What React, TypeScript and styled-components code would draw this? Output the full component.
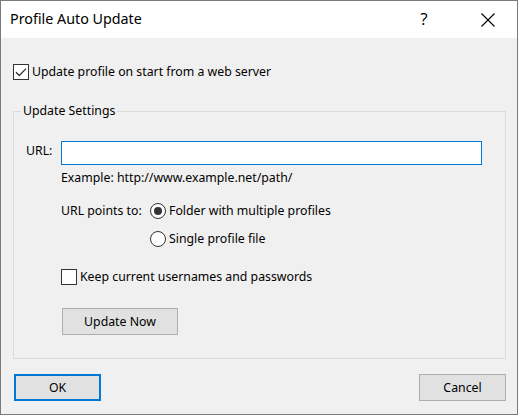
import styled, { createGlobalStyle } from 'styled-components';

const GlobalStyle = createGlobalStyle`
  html, body {
    margin: 0;
    padding: 0;
    background: #ffffff;
  }
  body {
    font-family: "Noto Sans", "Open Sans", "Liberation Sans", sans-serif;
    font-size: 12.3px;
    line-height: 16px;
    color: #000;
  }
`;

const App = () => {
  return (
    <>
      <GlobalStyle />
      <Window>
        <TitleBar>
          <Title>Profile Auto Update</Title>
          <HelpButton>?</HelpButton>
          <CloseButton>
            <svg width="14" height="14" viewBox="0 0 14 14">
              <path d="M0.5 0.5L13.5 13.5M13.5 0.5L0.5 13.5" stroke="#000" strokeWidth="1.1" fill="none" />
            </svg>
          </CloseButton>
        </TitleBar>

        <Body>
          <CheckRow>
            <CheckBox checked />
            <span>Update profile on start from a web server</span>
          </CheckRow>

          <Group>
            <Legend>Update Settings</Legend>

            <UrlRow>
              <FieldLabel>URL:</FieldLabel>
              <UrlInput type="text" />
            </UrlRow>
            <Hint>Example: http://www.example.net/path/</Hint>

            <PointsGrid>
              <span>URL points to:</span>
              <RadioRow>
                <Radio checked />
                <span>Folder with multiple profiles</span>
              </RadioRow>
              <span />
              <RadioRow>
                <Radio />
                <span>Single profile file</span>
              </RadioRow>
            </PointsGrid>

            <KeepRow>
              <CheckBox />
              <span>Keep current usernames and passwords</span>
            </KeepRow>

            <UpdateButton>Update Now</UpdateButton>
          </Group>

          <Footer>
            <DialogButton primary>OK</DialogButton>
            <DialogButton>Cancel</DialogButton>
          </Footer>
        </Body>
      </Window>
    </>
  );
};

const CheckBox = ({ checked }: { checked?: boolean }) => (
  <Box>
    {checked && (
      <svg width="12" height="12" viewBox="0 0 12 12">
        <path d="M1 6.2L4.3 9.5L11 2.6" stroke="#333" strokeWidth="1.3" fill="none" />
      </svg>
    )}
  </Box>
);

const Radio = ({ checked }: { checked?: boolean }) => (
  <RadioCircle>{checked && <Dot />}</RadioCircle>
);

export default App;

const Window = styled.div`
  box-sizing: border-box;
  width: 518px;
  height: 415px;
  border: 1px solid #7a7a7a;
  background: #f0f0f0;
  display: flex;
  flex-direction: column;
`;

const TitleBar = styled.div`
  height: 37px;
  background: #ffffff;
  display: flex;
  align-items: center;
  padding-left: 9px;
  flex-shrink: 0;
`;

const Title = styled.div`
  font-size: 14.3px;
  flex: 1;
  margin-top: -1px;
`;

const HelpButton = styled.div`
  font-size: 17px;
  font-family: "Open Sans", "Noto Sans", sans-serif;
  width: 20px;
  margin-right: 47px;
  margin-top: -2px;
  text-align: center;
`;

const CloseButton = styled.div`
  width: 14px;
  height: 14px;
  margin-right: 22px;
  display: flex;
`;

const Body = styled.div`
  flex: 1;
  display: flex;
  flex-direction: column;
  padding: 26px 11px 0 12px;
`;

const CheckRow = styled.label`
  display: flex;
  align-items: center;
  gap: 3px;
  height: 16px;
`;

const Box = styled.span`
  box-sizing: border-box;
  width: 16px;
  height: 16px;
  border: 1px solid #333;
  background: #fff;
  display: flex;
  align-items: center;
  justify-content: center;
  flex-shrink: 0;
`;

const Group = styled.fieldset`
  margin: 23px 0 0 0;
  padding: 0 12px 23px 12px;
  border: 1px solid #dcdcdc;
  display: flex;
  flex-direction: column;
  align-items: flex-start;
`;

const Legend = styled.legend`
  padding: 0 2px;
  margin-left: -5px;
  line-height: 16px;
`;

const UrlRow = styled.div`
  display: grid;
  grid-template-columns: 35px 421px;
  align-items: center;
  margin-top: 22px;
  height: 24px;
`;

const FieldLabel = styled.span`
  margin-top: 2px;
  align-self: start;
`;

const UrlInput = styled.input`
  box-sizing: border-box;
  height: 24px;
  width: 100%;
  border: 1px solid #0078d7;
  background: #fff;
  outline: none;
  margin: 0;
`;

const Hint = styled.div`
  margin: 5px 0 0 35px;
`;

const PointsGrid = styled.div`
  display: grid;
  grid-template-columns: 89px auto;
  row-gap: 12px;
  align-items: center;
  margin: 17px 0 0 35px;
`;

const RadioRow = styled.label`
  display: flex;
  align-items: center;
  gap: 3px;
  height: 16px;
`;

const RadioCircle = styled.span`
  box-sizing: border-box;
  width: 16px;
  height: 16px;
  border: 1px solid #333;
  border-radius: 50%;
  background: #fff;
  display: flex;
  align-items: center;
  justify-content: center;
`;

const Dot = styled.span`
  width: 8px;
  height: 8px;
  border-radius: 50%;
  background: #333;
`;

const KeepRow = styled(CheckRow)`
  margin: 22px 0 0 35px;
`;

const UpdateButton = styled.button`
  box-sizing: border-box;
  margin: 23px 0 0 36px;
  width: 116px;
  height: 27px;
  background: #e1e1e1;
  border: 1px solid #adadad;
  font: inherit;
  color: #000;
  padding: 0;
`;

const Footer = styled.div`
  display: flex;
  justify-content: space-between;
  margin: 15px 0 0 1px;
`;

const DialogButton = styled.button<{ primary?: boolean }>`
  box-sizing: border-box;
  width: 87px;
  height: 27px;
  background: #e1e1e1;
  border: ${p => (p.primary ? '2px solid #0078d7' : '1px solid #adadad')};
  font: inherit;
  color: #000;
  padding: 0;
`;
